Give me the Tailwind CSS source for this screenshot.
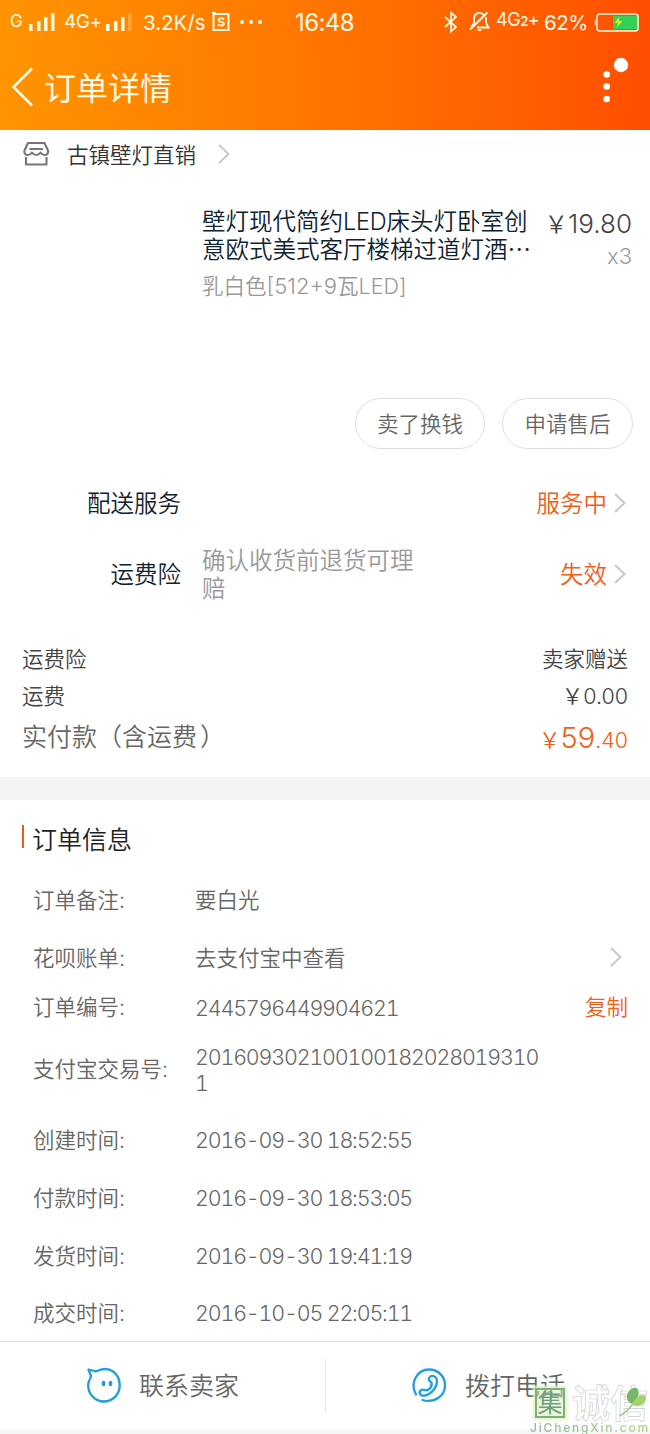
<!DOCTYPE html>
<html lang="zh-CN">
<head>
    <meta charset="UTF-8">
    <meta name="viewport" content="width=device-width, initial-scale=1.0">
    <title>订单详情</title>
    <script src="https://cdn.jsdelivr.net/npm/@tailwindcss/browser@4"></script>
</head>
<body class="bg-white font-['Inter','Noto_Sans_CJK_SC',sans-serif] font-[350] text-[#666] w-[650px] h-[1434px] overflow-hidden relative">

    <!-- Header -->
    <header class="h-[130px] bg-linear-to-r from-[#ff9400] to-[#ff4e00] text-[#fffbe6]">
        <!-- Status bar -->
        <div class="h-11 flex items-center font-normal whitespace-nowrap">
            <div class="w-[295px] pl-2.5 flex items-center">
                <span class="w-[19px] text-[17px]">G</span>
                <svg class="w-[26px] h-5 shrink-0" viewBox="0 0 26 20" fill="currentColor"><path d="M0 12h3.500v7H0zM8 9h3.500v10H8zM15 5h3.500v14H15zM22 1h3.500v18H22z"/></svg>
                <span class="w-[42px] ml-[9px] text-[19px] tracking-tight">4G+</span>
                <svg class="w-[26px] h-5 shrink-0" viewBox="0 0 26 20" fill="currentColor"><path d="M0 12h3.500v7H0zM8 9h3.500v10H8zM15 5h3.500v14H15z"/><path opacity=".25" d="M22 1h3.500v18H22z"/></svg>
                <span class="w-[63px] ml-[11px] mt-0.5 text-[20.5px]">3.2K/s</span>
                <svg class="w-[18px] h-5 ml-1.5 shrink-0" viewBox="0 0 18 20" fill="none" stroke="currentColor" stroke-width="2"><path d="M1.500 2h15v16h-15zM0 1h4"/><path stroke-width="1.800" d="M12 7.500c-1-1.500-5.500-1.500-5.500.7 0 2.300 5.500 1.200 5.500 3.600 0 2.200-5 2.200-6 .4"/></svg>
                <svg class="w-[22px] h-1 ml-[10px] shrink-0" viewBox="0 0 22 4" fill="currentColor"><circle cx="2" cy="2" r="2"/><circle cx="11" cy="2" r="2"/><circle cx="20" cy="2" r="2"/></svg>
            </div>
            <span class="w-[149px] mt-0.5 text-[24px] tracking-tight">16:48</span>
            <svg class="w-[14px] h-[22px] shrink-0" viewBox="0 0 14 22" fill="none" stroke="currentColor" stroke-width="1.700"><path d="M1 6l11 10-5 4.500v-19L12 6 1 16"/></svg>
            <svg class="w-[22px] h-[22px] ml-[11px] shrink-0" viewBox="0 0 22 22" fill="none" stroke="currentColor" stroke-width="1.900"><path d="M15 4C10-.5 5 3 5 8v4l-2.500 4M8 16.500h11.500L17 12V6M1 18.500L18.500 1.500"/><path fill="currentColor" stroke="none" d="M7.500 18.500h6q-3 3.500-6 0z"/></svg>
            <span class="w-[48px] ml-[5px] text-[18px] tracking-tight -mt-1.5">4G<span class="text-[13px] font-semibold">2</span>+</span>
            <span class="w-[48px] mt-0.5 text-[20.5px] tracking-tight">62%</span>
            <svg class="w-[47px] h-5 shrink-0" viewBox="0 0 47 20" fill="none"><path fill="currentColor" d="M4 7v7q-3-3.500 0-7z"/><rect x="5" y="2" width="41" height="17" rx="3" stroke="currentColor" stroke-width="1.500"/><path fill="#33d058" d="M21 4h24v13H21z"/><path fill="#d6ea27" d="M27.500 4.500l-5 6.500h3.500l-1.500 5 6-7H27z"/></svg>
        </div>
        <!-- Title bar -->
        <div class="h-[86px] flex items-center pl-[11px] relative">
            <svg class="w-[22px] h-10 shrink-0" viewBox="0 0 22 40" fill="none" stroke="currentColor" stroke-width="2.600"><path d="M21 1.500L2.500 20 21 38.500"/></svg>
            <h1 class="ml-[11px] mt-[3px] text-[32px] font-normal">订单详情</h1>
            <svg class="absolute left-[602px] top-[13px] w-7 h-12" viewBox="0 0 28 48" fill="#fff"><circle cx="19" cy="8" r="7.200"/><circle cx="4.700" cy="17.500" r="3.300"/><circle cx="4.700" cy="29.500" r="3.300"/><circle cx="4.700" cy="42" r="3.300"/></svg>
        </div>
    </header>

    <!-- Shop -->
    <div class="h-[50px] flex items-center pl-[23px] text-[21.5px] text-[#333]">
        <svg class="w-[27px] h-6 mb-0.5 shrink-0" viewBox="0 0 27 24" fill="none" stroke="#77747c" stroke-width="2.100" stroke-linejoin="round"><path d="M5 1h16.500L25 8.500q.5 4.500-3.500 4.500-2.500 0-4-2.500-1.500 2.500-4.200 2.500T9 10.500Q7.500 13 5 13 .7 13 1.500 8.500zM6.500 7h13.500M3 15v7.500h20.500V15"/></svg>
        <span class="ml-[17px]">古镇壁灯直销</span>
        <svg class="w-3 h-5 mb-0.5 ml-[22px]" viewBox="0 0 12 20" fill="none" stroke="#c8c8c8" stroke-width="2"><path d="M1 1l9.500 9L1 19"/></svg>
    </div>

    <!-- Product -->
    <div class="h-[218px] pt-7 pl-[202px] pr-[18px] flex justify-between">
        <div class="text-[23.5px] leading-[27.5px] whitespace-nowrap text-[#0f2230]">
            <p>壁灯现代简约<span class="tracking-[-0.01em]">LED</span>床头灯卧室创</p>
            <p>意欧式美式客厅楼梯过道灯酒⋯</p>
            <p class="mt-2.5 text-[21.5px] text-[#999]">乳白色<span class="text-[22px]">[512+9</span>瓦LED]</p>
        </div>
        <div class="text-right whitespace-nowrap">
            <p class="text-[26px] leading-[32px] text-[#444]"><span class="text-[23.5px]">￥</span>19.80</p>
            <p class="text-[22px] leading-[30px] text-[#999]">x3</p>
        </div>
    </div>

    <!-- Item actions -->
    <div class="h-[51px] flex justify-end gap-[17px] pr-[17px] text-[21.5px]">
        <button class="w-[130px] pt-0.5 border border-[#dedede] rounded-full">卖了换钱</button>
        <button class="w-[131px] pt-0.5 border border-[#dedede] rounded-full">申请售后</button>
    </div>

    <!-- Services -->
    <div class="h-[108px] pt-5 text-[23.5px] leading-[28px]">
        <div class="h-[69px] flex items-center pr-6">
            <span class="w-[181px] text-right text-[#0f2230]">配送服务</span>
            <span class="ml-auto text-[#f25d17]">服务中</span>
            <svg class="w-3 h-5 mb-0.5 ml-[7px]" viewBox="0 0 12 20" fill="none" stroke="#c8c8c8" stroke-width="2"><path d="M1 1l9.500 9L1 19"/></svg>
        </div>
        <div class="h-[74px] flex items-center pr-6">
            <span class="w-[181px] text-right text-[#0f2230]">运费险</span>
            <span class="w-[215px] ml-[21px] text-[#999]">确认收货前退货可理赔</span>
            <span class="ml-auto text-[#f25d17]">失效</span>
            <svg class="w-3 h-5 mb-0.5 ml-[7px]" viewBox="0 0 12 20" fill="none" stroke="#c8c8c8" stroke-width="2"><path d="M1 1l9.500 9L1 19"/></svg>
        </div>
    </div>

    <!-- Fees -->
    <div class="h-[220px] pt-[84px] px-[22px] text-[21.5px] text-[#444]">
        <div class="h-9 flex items-center justify-between"><span>运费险</span><span>卖家赠送</span></div>
        <div class="h-9 pt-0.5 flex items-center justify-between"><span>运费</span><span>￥0.00</span></div>
        <div class="h-12 pt-0.5 flex items-center justify-between">
            <span class="text-[25px] text-[#666]">实付款（含运费<span class="ml-[3px]">）</span></span>
            <span class="text-[#f25d17]">￥<span class="text-[29px]">59</span>.40</span>
        </div>
    </div>

    <div class="h-[23px] bg-[#f6f3f6]"></div>

    <!-- Order info -->
    <section class="h-[541px] text-[21.5px] leading-[26px]">
        <div class="h-[71px] pt-[3px] pb-px pl-[22px] flex items-center">
            <i class="w-0.5 h-[23px] bg-[#ec5a1b]"></i>
            <h2 class="ml-2 mt-1.5 text-[25px] text-[#222]">订单信息</h2>
        </div>
        <div class="h-[58px] flex items-center pl-[33px]"><span class="w-[162px]">订单备注:</span><span>要白光</span></div>
        <div class="h-[57px] flex items-center pl-[33px] pr-7">
            <span class="w-[162px]">花呗账单:</span><span>去支付宝中查看</span>
            <svg class="w-3 h-5 mb-0.5 ml-auto" viewBox="0 0 12 20" fill="none" stroke="#c8c8c8" stroke-width="2"><path d="M1 1l9.500 9L1 19"/></svg>
        </div>
        <div class="h-[42px] flex items-center pl-[33px] pr-[22px]"><span class="w-[162px]">订单编号:</span><span class="mt-0.5 tabular-nums tracking-[-1.2px]">2445796449904621</span><span class="ml-auto text-[#f25d17]">复制</span></div>
        <div class="h-[83px] pb-0.5 flex items-center pl-[33px]"><span class="w-[162px]">支付宝交易号:</span><span class="mt-0.5 tabular-nums tracking-[-1.2px]">201609302100100182028019310<br>1</span></div>
        <div class="h-[58px] flex items-center pl-[33px]"><span class="w-[162px]">创建时间:</span><span class="tabular-nums tracking-[-1.2px]">2016-09-30 18:52:55</span></div>
        <div class="h-[58px] flex items-center pl-[33px]"><span class="w-[162px]">付款时间:</span><span class="tabular-nums tracking-[-1.2px]">2016-09-30 18:53:05</span></div>
        <div class="h-[58px] flex items-center pl-[33px]"><span class="w-[162px]">发货时间:</span><span class="tabular-nums tracking-[-1.2px]">2016-09-30 19:41:19</span></div>
        <div class="h-[56px] flex items-center pl-[33px]"><span class="w-[162px]">成交时间:</span><span class="tabular-nums tracking-[-1.2px]">2016-10-05 22:05:11</span></div>
    </section>

    <!-- Contact bar -->
    <footer class="h-[88px] border-t border-[#dcdcdc] flex items-center text-[25px]">
        <div class="w-[325px] pl-[86px] flex items-center">
            <svg class="w-9 h-9 mb-0.5" viewBox="0 0 36 36" fill="none" stroke="#1d9fe0" stroke-width="2.300" stroke-linecap="round" stroke-linejoin="round"><path d="M3.800 12.500L5 9 2.500 2.500 9.800 4.500C24-2.500 33.700 7 33.700 18.500c0 9-7.200 16-15.700 16S2.200 27.500 2.200 18.500Q2.200 16 3 14"/><path stroke-width="3.600" d="M17.500 15.500v2M24.500 15.500v2"/></svg>
            <span class="ml-[17px] mt-0.5">联系卖家</span>
        </div>
        <i class="w-px h-[53px] bg-[#e6e6e6]"></i>
        <div class="pl-[85px] flex items-center">
            <svg class="w-9 h-9 mb-0.5" viewBox="0 0 36 36" fill="none" stroke="#1d9fe0" stroke-width="2.300" stroke-linecap="round" stroke-linejoin="round"><path d="M5 27.500C-1.500 16 6 2.500 18 2.500c9.500 0 16 7 16 16 0 10-10 18-22.500 14.500"/><path d="M20.500 15.500C15.500 12.500 18.500 8 22.500 9c5 1.500 4 9 .5 13.500-4 5-10 7.500-13 5.500-3-2.500-.5-6.500 3.500-5 4 1.300 8-3 7-7.500z"/></svg>
            <span class="ml-[18px] mt-0.5">拨打电话</span>
        </div>
    </footer>
    <div class="h-[5px] bg-[#f6f6f6]"></div>

    <!-- Site watermark -->
    <div class="absolute left-[530px] top-[1385px] w-[120px] h-[49px] whitespace-nowrap">
        <div class="absolute left-[5px] top-[3px] w-[30px] h-[30px] bg-[#d6edb0]/50 border-2 border-[#7caf7d] flex items-center justify-center text-[25px] leading-none font-normal text-[#6d9f82] shadow-[0_0_3px_2px_#e3f3c5]">集</div>
        <span class="absolute left-[42px] top-px text-[38px] leading-[34px] font-bold text-white [-webkit-text-stroke:0.7px_#cfcfcf]">诚信</span>
        <svg class="absolute left-[88px] top-0.5 w-[30px] h-8" viewBox="0 0 30 32"><path fill="#77b66d" d="M14 17C3 12 12-1 18 1c5 2 2 12-3 16z"/><path fill="#a5d36b" d="M15 18C17 8 23 7 28 9c1 8-7 12-13 9z"/><path fill="none" stroke="#a7cf7b" stroke-width="1.500" d="M16 15Q9 26 1 29"/></svg>
        <span class="absolute left-0 top-[36px] text-[12px] leading-[13px] font-medium tracking-[1.8px] bg-linear-to-r from-[#8fb3a0] to-[#a9d576] bg-clip-text text-transparent">JiChengXin.com</span>
    </div>

</body>
</html>
